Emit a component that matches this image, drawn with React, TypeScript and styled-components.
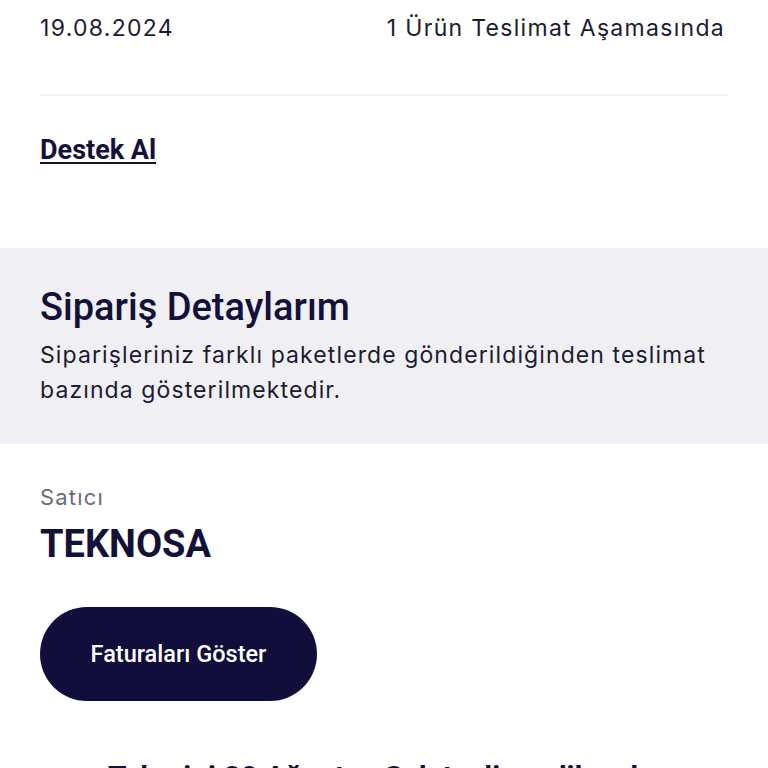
import React from "react";
import styled, { createGlobalStyle } from "styled-components";

const Global = createGlobalStyle`
  html, body { margin: 0; padding: 0; background: #ffffff; }
  body { font-family: "Inter", "Noto Sans", sans-serif; color: #13113a; overflow: hidden; }
  * { box-sizing: border-box; }
`;

const Page = styled.div`
  width: 768px;
  height: 768px;
  overflow: hidden;
  display: flex;
  flex-direction: column;
`;

const Section = styled.div`
  padding: 0 40px;
`;

const TopRow = styled.div`
  display: flex;
  justify-content: space-between;
  align-items: center;
  height: 56px;
  margin-right: 3px;
  font-family: "Inter", sans-serif;
  font-weight: 400;
  font-size: 23px;
  letter-spacing: 1.3px;
  color: #1c1b33;
`;

const Divider = styled.div`
  height: 2px;
  background: #f3f3f6;
  margin-top: 38px;
`;

const LinkText = styled.a`
  display: inline-block;
  margin-top: 38px;
  font-family: "Roboto", sans-serif;
  font-weight: 700;
  font-size: 27px;
  letter-spacing: 0;
  color: #13113a;
  text-decoration: underline;
  text-underline-offset: 3px;
  text-decoration-thickness: 2px;
`;

const InfoBand = styled.div`
  margin-top: 82px;
  background: #f0f0f4;
  padding: 36px 40px 36px;
`;

const BandTitle = styled.h2`
  margin: 0;
  font-family: "Roboto", sans-serif;
  font-weight: 500;
  font-size: 38px;
  letter-spacing: 0;
  line-height: 46px;
  color: #13113a;
`;

const BandText = styled.p`
  margin: 8px 0 0;
  font-family: "Inter", sans-serif;
  font-weight: 400;
  font-size: 23px;
  letter-spacing: 1.1px;
  line-height: 35px;
  color: #1c1b33;
`;

const SellerLabel = styled.div`
  margin-top: 40px;
  font-family: "Inter", sans-serif;
  font-size: 22px;
  letter-spacing: 1.2px;
  color: #6b6b78;
`;

const SellerName = styled.div`
  margin-top: 11px;
  font-family: "Roboto", sans-serif;
  font-weight: 700;
  font-size: 38px;
  line-height: 46px;
  color: #13113a;
`;

const PillButton = styled.button`
  margin-top: 40px;
  width: 277px;
  height: 94px;
  border: none;
  border-radius: 47px;
  background: #110e3c;
  color: #ffffff;
  font-family: "Roboto", sans-serif;
  font-weight: 500;
  font-size: 23.5px;
  cursor: pointer;
`;

const DeliveryText = styled.div`
  margin-top: 58px;
  padding-left: 68px;
  font-family: "Roboto", sans-serif;
  font-weight: 700;
  font-size: 30px;
  white-space: nowrap;
  color: #13113a;
`;

export default function App() {
  return (
    <Page>
      <Global />
      <Section>
        <TopRow>
          <span>19.08.2024</span>
          <span>1 Ürün Teslimat Aşamasında</span>
        </TopRow>
        <Divider />
        <LinkText>Destek Al</LinkText>
      </Section>
      <InfoBand>
        <BandTitle>Sipariş Detaylarım</BandTitle>
        <BandText>
          Siparişleriniz farklı paketlerde gönderildiğinden teslimat bazında gösterilmektedir.
        </BandText>
      </InfoBand>
      <Section>
        <SellerLabel>Satıcı</SellerLabel>
        <SellerName>TEKNOSA</SellerName>
        <PillButton>Faturaları Göster</PillButton>
        <DeliveryText>Tahmini 20 Ağustos Salı teslim edilecek</DeliveryText>
      </Section>
    </Page>
  );
}
